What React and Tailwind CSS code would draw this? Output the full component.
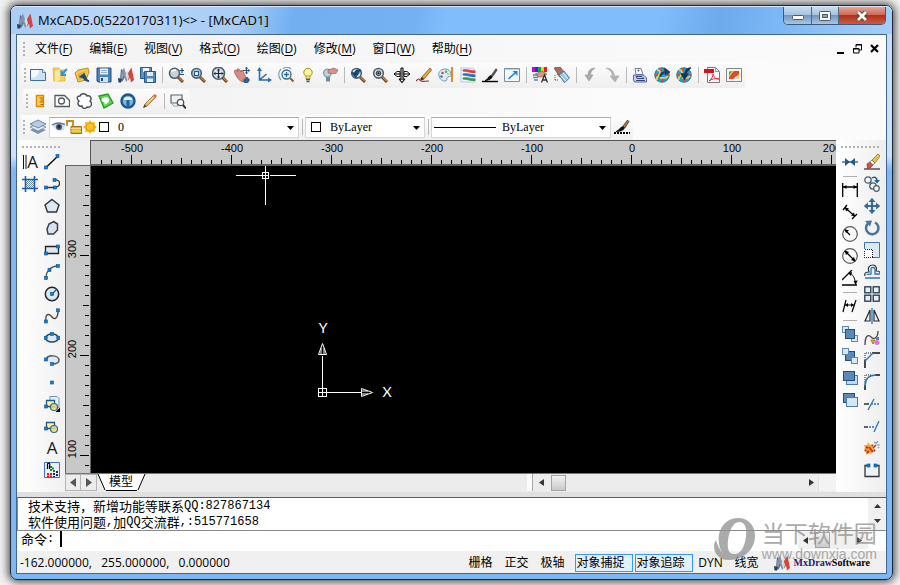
import React, { useLayoutEffect, useRef, useState } from "react";

const LATIN = "font-['Open_Sans','Noto_Sans_CJK_SC',sans-serif]";

/* ---------- drawing helpers ---------- */

function Icon({ children, className = "" }) {
  return (
    <svg width="16" height="16" viewBox="0 0 16 16" className={`block shrink-0 ${className}`} fill="none" aria-hidden="true">
      {children}
    </svg>
  );
}

const Node = ({ x, y }) => <rect x={x} y={y} width="3" height="3" fill="#0a84d8" stroke="#0a4f94" strokeWidth=".6" />;

const Lens = ({ children, fill = "#b9d3ea", r = 4.8 }) => (
  <>
    <path d="M10 10l5 5" stroke="#7a3c12" strokeWidth="3" />
    <path d="M10.5 10.2l4.2 4.2" stroke="#d58a45" strokeWidth="1.2" />
    <circle cx="6.5" cy="6.3" r={r} fill={fill} stroke="#4d5f70" strokeWidth="1.6" />
    {children}
  </>
);

const Logo = () => (
  <>
    <path d="M2 12L3 2l3 2 1 6-3 5z" fill="#4d6c93" />
    <path d="M4 4L6 .500l4 12L8 15 6 9l-3 5.500L.500 15z" fill="#8393a8" />
    <path d="M10 6l3.500-5.500L16 13l-3 2.500-1-5-2 3z" fill="#d8433c" />
    <path d="M9 3l2 7-1.500 4-2-6z" fill="#d5dce4" />
    <path d="M0 11l4 1-1 3.500H.500z" fill="#26405e" />
  </>
);

const Folder = () => (
  <>
    <path d="M1 1h6l1 2h5v11H2z" fill="#f5cf62" stroke="#d9a52e" strokeWidth=".7" />
    <path d="M3 4l5-2v11l-5 2z" fill="#fde79b" />
  </>
);

const Globe = ({ children }) => (
  <>
    <circle cx="8" cy="8" r="7.3" fill="#2c9bd0" stroke="#216887" strokeWidth=".8" />
    <path d="M3 3c3 0 4 3 2 5s-3 3-2 5M6 11c3-1 5 2 8-2" stroke="#f4d04c" strokeWidth="1.8" />
    <path d="M7 1v3M1 8h3M8 15l1-3M13 8h2" stroke="#df4a35" strokeWidth="1.8" />
    {children}
  </>
);

const Pencil = () => (
  <>
    <path d="M3 11L12 2l2 2-9 9-3 1z" fill="#f0b450" stroke="#94672f" strokeWidth=".8" />
    <path d="M11 3l2-2 2 2-2 2z" fill="#d86454" />
    <path d="M1 15l1.5-3.5 2 2z" fill="#3b3b3b" />
    <path d="M5 10.5l7-7" stroke="#fae1a4" />
  </>
);

const Brush = () => (
  <>
    <path d="M0 14.5h16" stroke="#000" strokeWidth="1.4" />
    <path d="M3 13c2 0 3-4 6-5l2 1.5C9 13 6 14 3 14z" fill="#111" />
    <path d="M9.5 8L14 1.5 15.2 3l-4 6z" fill="#555" stroke="#333" strokeWidth=".5" />
  </>
);

const Sq = ({ x, y, s = 9, dark, light }) => (
  <rect x={x} y={y} width={s} height={s} fill={dark ? "#5d89b7" : light ? "#d9e8f5" : "#b8d0e7"} stroke={dark ? "#214e80" : "#5f89b3"} strokeWidth="1" />
);

const BlockShape = () => (
  <>
    <path d="M2.500 4.500h8v6h-8z" fill="#fff4a6" stroke="#215a86" strokeWidth="1.300" />
    <circle cx="10" cy="11" r="3.500" fill="#ead97c" fillOpacity=".85" stroke="#3c6688" strokeWidth="1.200" />
    <Node x=".500" y="9" />
  </>
);

const ART = {
  logo: <Logo />,
  sheet: <><path d="M.5 2.5h12l3 3v8H.5z" fill="#cde3f3" stroke="#416d99" /><path d="M1 3h8c0 5-4 8-8 8z" fill="#f4fafd" /><path d="M12.5 2.5v3h3" fill="#fff" stroke="#416d99" strokeWidth=".8" /></>,
  open: <><Folder /><path d="M15 2l-5 5M9.5 3.500V8H14" stroke="#2b94da" strokeWidth="2" /></>,
  openEdit: <><path d="M1 6l3-3 10-2 1 4-3 8-8 2z" fill="#f3ca4e" stroke="#a87a17" strokeWidth=".8" /><path d="M4 7l8-3-2 7-5 2z" fill="#dfaa35" /><path d="M15 14c-3 0-5-2-5-4M7 9.500l3-2 2 4z" stroke="#1f487e" strokeWidth="2" fill="#1f487e" /></>,
  save: <><path d="M1 1h14v14H2l-1-1z" fill="#4b81bc" stroke="#25517e" /><path d="M4 1.500h8v6H4z" fill="#eaf3fb" /><path d="M5 3.500h6M5 5.500h6" stroke="#8cb0d1" /><path d="M4 10h8v5H4z" fill="#d5dfe8" /><path d="M5 11h2v3H5z" fill="#28496c" /></>,
  saveAll: <><path d="M.5.5h11v11H.5z" fill="#5c91c8" stroke="#29578a" /><path d="M3 1h6v4H3z" fill="#eef6ff" /><path d="M4.500 4.500h11v11h-11z" fill="#4f86c0" stroke="#29578a" /><path d="M7 5h6v4H7zM7 11.500h6V15H7z" fill="#e4eef7" /></>,
  zoomPm: <><Lens r="5" fill="#cbd4dc"><path d="M3 4l5-1" stroke="#fff" strokeWidth="1.5" /></Lens><path d="M11.500 3.500h5M14 1v5M11.500 7.500h5" stroke="#174a7f" strokeWidth="1.1" /></>,
  zoomWin: <Lens><rect x="4.500" y="4.500" width="4" height="4" fill="#fff" stroke="#1e5c98" strokeWidth="1.200" /></Lens>,
  zoomExt: <><Lens r="6" fill="#d9e3ec" /><path d="M6.500 2v9M2 6.500h9" stroke="#1c2b3d" strokeWidth="1.200" /><path d="M6.500 1.200L8 3.500H5zM6.500 11.800L8 9.500H5zM1.200 6.500L3.500 5v3zM11.800 6.500L9.500 5v3z" fill="#1c2b3d" /></>,
  pan: <><path d="M0 4l2-1 2 2-1-3 2 0 2 3 0-2 2 1 3 7-3 4C5 14 2 9 0 4z" fill="#d88c84" stroke="#a35a52" strokeWidth=".8" /><path d="M9 13l4-3.500 3 3.500-2 3h-4z" fill="#33618f" /><path d="M12.500 0v7M9 3.500h7" stroke="#24558b" strokeWidth="1.200" /><path d="M12.500-.3l1.500 2h-3zM16.200 3.500l-2 1.500V2zM12.500 7.300l1.500-2h-3z" fill="#24558b" /></>,
  axes: <><path d="M3.500 2v11H14M3.500 13l7-6" stroke="#2c6cab" strokeWidth="1.600" /><path d="M3.500 0L6 4H1zM16 13l-4 2.500v-5z" fill="#2c6cab" /></>,
  orbit: <><circle cx="8.500" cy="7.500" r="4.500" fill="#edf5fb" stroke="#36668f" strokeWidth="1.300" /><path d="M8.500 5v5M6 7.500h5" stroke="#236db0" strokeWidth="1.300" /><path d="M12 11l3.500 3.500" stroke="#9b5a23" strokeWidth="2" /><path d="M3 2C0 5 0 10 3 13M5 1.500C8-.5 11 0 13 2" stroke="#7aa0c2" strokeWidth="1.200" /></>,
  bulb: <><circle cx="8" cy="5.500" r="4.200" fill="#fff69a" stroke="#a48d22" /><path d="M6 9h4v3H6z" fill="#ffe566" stroke="#a48d22" strokeWidth=".7" /><path d="M6 12.500h4M6.500 14.500h3" stroke="#4a5866" strokeWidth="1.400" /></>,
  bulbHand: <><circle cx="5.500" cy="6" r="4" fill="#bed4e4" stroke="#6a8ba7" /><path d="M4 10h4v4.500H4z" fill="#7089a0" /><path d="M6 3l6-2 4 2-2 3.500H9L6 6z" fill="#d99087" stroke="#9d5550" strokeWidth=".6" /></>,
  zoomPrev: <Lens fill="#d8e4ed"><path d="M11 4C9 2 5 3 5 7M2.500 6l3 4 3-4z" fill="#174777" stroke="#174777" strokeWidth="1.500" /></Lens>,
  zoomDyn: <Lens fill="#dce3e8"><circle cx="6.500" cy="6.300" r="2.300" fill="#9eabb5" stroke="#293845" /><circle cx="6.500" cy="6.300" r="1" fill="#111" /></Lens>,
  spread: <><path d="M7 1v12M9 1v12M0 7h6M10 7h6" stroke="#000" strokeWidth="1.100" /><path d="M7 1h2M5 12h2M9 12h2M5 12l3 3.500 3-3.500" stroke="#000" strokeWidth="1.100" /><path d="M3 4.500L0 7l3 2.500h3M13 4.500L16 7l-3 2.500h-3M3 4.500h3v5M13 4.500h-3v5" stroke="#000" strokeWidth=".9" /></>,
  drawPen: <><path d="M0 14c4-4 3-1 5 0s4 0 8 0" stroke="#8b3327" strokeWidth="1.200" /><path d="M5 11L14 1l1.500 2L8 12l-3 1z" fill="#e9a43a" stroke="#86571c" strokeWidth=".8" /><path d="M4.500 13.500L6 10l2 2z" fill="#222" /></>,
  palette: <><path d="M7 2C2 2 0 6 1 9c1 4 4 5 6 5 3 0 1-3 3-4s3 0 3-3c0-3-3-5-6-5z" fill="#dcecf5" stroke="#5f9ab9" /><circle cx="4.500" cy="6" r="1.300" fill="#e04b3d" /><circle cx="8" cy="4.800" r="1.300" fill="#5ab04c" /><circle cx="3.500" cy="9.500" r="1.300" fill="#3c75c0" /><circle cx="10" cy="7" r="1.100" fill="#efb82c" /><path d="M14 0v15" stroke="#e08b2d" strokeWidth="2" /></>,
  layersColor: <><path d="M1 1h12l2 2v12H1z" fill="#edf3fa" stroke="#a7bfd7" strokeWidth=".8" /><path d="M3 3c5-1 7 1 12 1v1.500C10 6 8 4 3 4z" fill="#e23b36" stroke="#e23b36" /><path d="M3 7c5-1 7 1 12 1v1.500C10 10 8 8 3 8z" fill="#3166c8" stroke="#3166c8" /><path d="M3 11c5-1 7 1 12 1v1.500c-5 .5-7-1.500-12-1.500z" fill="#39984a" stroke="#39984a" /></>,
  brush: <Brush />,
  brushDots: <><path d="M0 14h16" stroke="#000" strokeWidth="2" strokeDasharray="2 1" /><path d="M2 12c2 0 4-4 7-5l2 2c-2 3-5 4-9 4z" fill="#111" /><path d="M9 7l4.500-6L15 2.500 11 9z" fill="#a5753e" stroke="#333" strokeWidth=".7" /></>,
  fit: <><path d="M.5 1.500h15v13H.5z" fill="#f5fafe" stroke="#7191ac" /><path d="M1 2.500h14" stroke="#b9cfe2" /><path d="M4.500 12l6.500-6" stroke="#1e88d8" strokeWidth="1.600" /><path d="M13.500 4v5L8.500 4z" fill="#1e88d8" /></>,
  colorHand: <><path d="M0 0h3v5H0z" fill="#d400d4" /><path d="M3 0h3v5H3z" fill="#2030f0" /><path d="M6 0h3v5H6z" fill="#00a840" /><path d="M9 0h3v5H9z" fill="#f2d400" /><path d="M12 0h3v5h-3z" fill="#ef1b1b" /><path d="M3 7l7-3 5 3-3 3-6 0z" fill="#d59788" stroke="#89514a" strokeWidth=".6" /><path d="M1 8h5M1 10.500h5M2 13h4" stroke="#6189ad" strokeWidth="1.500" /><path d="M9.500 15.500L12.500 8l3 7.500M10.500 13h4" stroke="#333" strokeWidth="1.300" /></>,
  eraseHand: <><path d="M0 1l6-1 4 5-4 5z" fill="#a96d64" stroke="#734641" strokeWidth=".8" /><path d="M5 8l5-4 5.500 7-5 4.500z" fill="#9cc3e0" stroke="#4a7ba0" /><path d="M7 9l5 5M9 6l5 6" stroke="#eef7ff" /><path d="M1 8v5M3 7l2 3M1 13h4" stroke="#555" strokeDasharray="1 1" /></>,
  undo: <path d="M13 1C8 1 6 4 6 8H3l4 6 4-6H8.500c0-3 1.500-5 4.500-7z" fill="#aaa" stroke="#999" strokeWidth=".6" />,
  redo: <path d="M2 1c5 0 8 3 8.500 8H15l-4 6-5-6h2.500C8 5 6 3 2 1z" fill="#b3b3b3" stroke="#aaa" strokeWidth=".6" />,
  print: <><path d="M3 1.500h6l2 6H4z" fill="#fff" stroke="#6d7ca8" /><circle cx="6.500" cy="3.500" r="1" fill="#445a94" /><path d="M1.500 8h10l3 3v4h-12l-1-2z" fill="#cad3ed" stroke="#5668a0" /><path d="M4 9.500h6l2 2H5zM4 13.500h9" stroke="#34477f" strokeWidth="1" /></>,
  globeUp: <Globe><path d="M6 10c0-4 3-5 6-5M10 1.500L15.500 5 11 8" fill="#18416e" stroke="#18416e" strokeWidth="1.500" /></Globe>,
  globeDown: <Globe><path d="M15 1c-5 0-6 3-6 7M5.500 7h6L8.500 12z" fill="#143655" stroke="#143655" strokeWidth="1.500" /></Globe>,
  pdf: <><path d="M3.500.5h8l4 4v11h-12z" fill="#fff" stroke="#6a6a6a" strokeWidth=".9" /><path d="M11.500.5v4h4" stroke="#999" /><path d="M0 2h10v4H0z" fill="#d21518" /><path d="M5 14c3-2 4-5 4-7 1 4 3 5 6 5-4-1-7 0-10 2z" stroke="#df2a2a" strokeWidth="1" /></>,
  image: <><path d="M.5 1.500h15v13H.5z" fill="#f5f5f5" stroke="#858585" /><path d="M3 4h10v8H3z" fill="#f4c648" /><path d="M3 10l5-6h5v3l-6 5H3z" fill="#dd4b28" /><path d="M3 5l3-1-3 4z" fill="#4f9b46" /><path d="M8 12l2-3 3 3z" fill="#cde" /></>,
  ruler: <><path d="M4.500 2.500h7v11h-7z" fill="#ffd24d" stroke="#e08600" strokeWidth="1.400" /><path d="M7.500 5H11M8.500 7H11M7.500 9H11M8.500 11.500H11" stroke="#a95d00" /></>,
  area: <><path d="M1 2.500h9.500l5 5V13.500H1z" fill="#fff" stroke="#505a62" strokeWidth="1.300" /><circle cx="7.500" cy="8" r="3" stroke="#505a62" strokeWidth="1.300" /></>,
  cloud: <path d="M4 3c1-3 6-3 7 0 4-1 5 3 3 5 3 3 1 7-3 6-1 2-5 2-5-1-4 1-5-3-3-5-3-3-2-5 1-5z" fill="#fff" stroke="#42505a" strokeWidth="1.400" />,
  green: <><path d="M1 3l9-2 5 9-9 5z" fill="#5ed84a" stroke="#249b25" strokeWidth="1.300" /><path d="M5 5c4-2 7 0 6 3s-3 2-4 4L6 9c-3 0-3-3-1-4z" fill="#fff" /></>,
  wheel: <><circle cx="8" cy="8" r="6.500" fill="#7fb4dd" stroke="#195990" strokeWidth="2.400" /><path d="M4 5c2-1.500 6-1.500 8 0v2H4z" fill="#e3f1fb" /><path d="M6.500 7h3v6h-3z" fill="#1866a3" /></>,
  pencil: <Pencil />,
  find: <><path d="M1 2h11v8H1z" fill="#eef0f2" stroke="#5c6771" strokeWidth="1.200" /><path d="M1 10l3 3h4" stroke="#9aa2a9" /><circle cx="10.500" cy="9.500" r="3.200" fill="#fff" stroke="#4b5966" strokeWidth="1.300" /><path d="M13 12l3 3.500" stroke="#333" strokeWidth="2" /></>,
  layers: <><path d="M0 11l7-3 9 3-8 4z" fill="#7893ad" /><path d="M0 8l8-3 8 3-8 4z" fill="#e8eff6" stroke="#6b88a5" strokeWidth=".8" /><path d="M0 5l8-4 8 4-8 4z" fill="#b7cce0" stroke="#5d7e9e" strokeWidth=".9" /></>,
  eye: <><path d="M2 6c4-4 9-3 13 0l-1 5c-4 2-9 0-12-5z" fill="#d3dce5" /><path d="M2 6c4-2.500 8-3 13-.500" stroke="#6c7d8e" strokeWidth="1.400" /><circle cx="9" cy="8" r="3" fill="#34597f" /><circle cx="9" cy="7.500" r="1.200" fill="#0e1d2e" /></>,
  lock: <><path d="M1 7V2h6v6" stroke="#c08a24" strokeWidth="1.800" /><path d="M5 7.500h10.500v7H5z" fill="#e9b03a" stroke="#a36c0d" /><path d="M5 9.500h10M5 12h10" stroke="#ffde83" /></>,
  sun: <><path d="M8 1l1.700 2.500L13 3l-.5 3L15 8l-2.500 2 .5 3-3.300-.5L8 15l-1.700-2.500L3 13l.5-3L1 8l2.500-2L3 3l3.300.5z" fill="#ffb400" /><circle cx="8" cy="8" r="4" fill="#ffc928" stroke="#f19600" /></>,
  box: <rect x="3.500" y="3.500" width="9" height="9" fill="#fff" stroke="#000" />,

  hatch: <><path d="M3.500 0v16M12.500 0v16M0 3.500h16M0 12.500h16" stroke="#1f5f9f" strokeWidth="1.600" /><path d="M4 4l8 8M4 6l6 6M6 4l6 6M4 8l4 4M8 4l4 4M4 10l2 2M10 4l2 2" stroke="#42719f" strokeWidth=".8" /></>,
  line: <><path d="M2 13.500L14 2" stroke="#111" strokeWidth="1.500" /><Node x=".5" y="12" /><Node x="12" y=".5" /></>,
  pline: <><path d="M2 11.500h10M10 4c7-1 7 6 2 7" stroke="#333" strokeWidth="1.300" /><Node x=".5" y="10" /><Node x="9.500" y="10" /><Node x="9" y="2.500" /></>,
  pentagon: <path d="M8 1.500L15 7l-2.500 7h-9L1 7z" fill="#dce9f3" stroke="#2e3338" strokeWidth="1.400" />,
  polygon: <path d="M9.500 1.500L13.500 4v6l-4 4H4L3 9l2-5z" fill="#d6e2ee" stroke="#3a3f44" strokeWidth="1.500" />,
  rect: <><path d="M1.500 4.500h13v7h-13z" fill="#dce9f3" stroke="#222" strokeWidth="1.300" /><Node x=".5" y="10" /><Node x="12.500" y="3" /></>,
  arc: <><path d="M2 14C2 7 7 2 14 2" stroke="#555048" strokeWidth="1.400" /><Node x=".5" y="12.500" /><Node x="4" y="4.500" /><Node x="12.500" y=".5" /></>,
  circle: <><circle cx="8" cy="8" r="6.700" fill="#dce9f4" stroke="#23282e" strokeWidth="1.500" /><path d="M8 8l5-5" stroke="#1c5d94" strokeWidth="1.200" /><Node x="6.500" y="6.500" /></>,
  spline: <><path d="M2 13C1 4 6 6 8 9s6 2 6-6" stroke="#4e4840" strokeWidth="1.400" /><Node x=".5" y="12" /><Node x="12.500" y=".8" /></>,
  ellipse: <><ellipse cx="8" cy="8" rx="6.500" ry="4" fill="#dce9f4" stroke="#38424a" strokeWidth="1.400" /><Node x=".2" y="6.500" /><Node x="12.800" y="6.500" /><Node x="6.500" y="2.500" /></>,
  ellArc: <><path d="M2 8c0-6 13-5 13 0 0 3-4 4-7 4" fill="#dce9f4" stroke="#4e5862" strokeWidth="1.500" /><Node x=".5" y="6" /><Node x="6.500" y="10.500" /></>,
  point: <Node x="6.500" y="7" />,
  insert: <><path d="M6 .500h7l2 2v9H6z" fill="#e5f0f8" stroke="#6a94ba" /><BlockShape /><path d="M16 11.500V16h-4.500z" fill="#000" /></>,
  block: <BlockShape />,
  table: <><path d="M.5.500h15v15H.5z" fill="#eaf2fb" stroke="#3d73b2" /><path d="M3.500 7V2c2-2 3 0 2 2v3" stroke="#000" strokeWidth="1.200" /><path d="M3 12h2M6 12h2M3 14.500h2M6 14.500h2" stroke="#e8101b" strokeWidth="2" /><path d="M7 4v5M8 6.500h2M9 9h2" stroke="#138321" strokeWidth="2" strokeDasharray="2 1" /><path d="M10 11v4M13 9v6" stroke="#21217b" strokeWidth="2" strokeDasharray="2 1" /></>,

  join: <><path d="M0 8h16" stroke="#24648e" strokeWidth="1.300" /><path d="M3 4l5 4-5 4zM13 4L8 8l5 4z" fill="#1e5d90" /></>,
  dimLin: <><path d="M.7 1v14M15.300 1v14M1 5h14" stroke="#000" strokeWidth="1.300" /><path d="M1 5l3.500-2v4zM15 5l-3.500-2v4z" fill="#000" /></>,
  dimAli: <><path d="M3 3.500l10 9M1 6l4-5M10 15l5-5" stroke="#000" strokeWidth="1.300" /><path d="M3 3.500l4 1-3 3zM13 12.500l-4-1 3-3z" fill="#000" /></>,
  dimRad: <><circle cx="8" cy="8" r="7.300" stroke="#5b5b5b" strokeWidth="1.200" /><path d="M3 4l5 5" stroke="#000" strokeWidth="1.300" /><path d="M2.500 3l4.500 1.500L4 7z" fill="#000" /></>,
  dimDia: <><circle cx="8" cy="8" r="7.300" stroke="#5b5b5b" strokeWidth="1.200" /><path d="M3 3l10 10" stroke="#000" strokeWidth="1.300" /><path d="M2.500 2.500L7 4 4 7zM13.500 13.500L9 12l3-3z" fill="#000" /></>,
  dimAng: <><path d="M0 15h15M0 10L10 0" stroke="#000" strokeWidth="1.300" /><path d="M7 3c4 1 6 5 6.500 11" stroke="#000" /><path d="M6 3l4-1-1 4zM13.700 15l-2-4 4-.5z" fill="#000" /></>,
  dimObl: <><path d="M1 14L4 2M10 14l4-12M3 7h9" stroke="#000" strokeWidth="1.200" /><path d="M3 7l3-2v4zM12 7L9 5v4z" fill="#000" /></>,
  order1: <><Sq x=".5" y=".5" s="6" light /><Sq x="9.500" y="9.500" s="6" light /><Sq x="3.500" y="3.500" s="9" dark /></>,
  order2: <><Sq x="3.500" y="3.500" s="9" dark /><Sq x=".5" y=".5" s="6" light /><Sq x="9.500" y="9.500" s="6" light /></>,
  order3: <><rect x="4.500" y="5.500" width="11" height="9" fill="#c4d9ec" stroke="#4d7cab" /><rect x="1.500" y="1.500" width="11" height="9" fill="#5d89b7" stroke="#214e80" /></>,
  order4: <><rect x="1.500" y="1.500" width="11" height="9" fill="#5d89b7" stroke="#214e80" /><rect x="4.500" y="5.500" width="11" height="9" fill="#d6e5f2" stroke="#4d7cab" /></>,

  erase: <><path d="M0 15h16" stroke="#3a2521" strokeWidth="1.200" /><path d="M3 10l3-2 3 3-3 3-2.500.500z" fill="#d85140" stroke="#86302a" strokeWidth=".7" /><path d="M6 8l2-2 3 3-2 2z" fill="#eef3f8" stroke="#4d6374" strokeWidth=".7" /><path d="M8 6l6-6 2 2-5 7z" fill="#f2c33e" stroke="#7d6724" strokeWidth=".7" /></>,
  copy: <><circle cx="4" cy="4" r="3.200" fill="#eef3f7" stroke="#4e5c6a" strokeWidth="1.300" /><circle cx="9" cy="10" r="3.200" fill="#eef3f7" stroke="#4e5c6a" strokeWidth="1.300" /><circle cx="12.500" cy="12.500" r="2.800" fill="#eef3f7" stroke="#4e5c6a" strokeWidth="1.200" /><path d="M8 2c3-2 5 0 5 3" stroke="#1e5f98" strokeWidth="1.500" /><path d="M10 4h6l-3 3.500z" fill="#1e5f98" /></>,
  move: <><path d="M8 2v12M2 8h12" stroke="#376b9f" strokeWidth="2.200" /><path d="M8-.2L11.500 4h-7zM8 16.200L11.500 12h-7zM-.2 8L4 4.500v7zM16.200 8L12 4.500v7z" fill="#376b9f" /></>,
  rotate: <><path d="M4 3.500a6.200 6.200 0 1 0 7-1" stroke="#4474a6" strokeWidth="2.500" /><path d="M1 1l7-.5-2 6z" fill="#4474a6" /></>,
  scale: <><path d="M.5.500h15v15H.5z" fill="#dce9f5" stroke="#3c76ab" /><path d="M0 7h9v9H0z" fill="#fff" /><path d="M.500 7.500h8v8h-8z" stroke="#222" strokeDasharray="1 1" shapeRendering="crispEdges" /></>,
  offset: <><path d="M1 12c-1-3 1-4 4-4-2-5 1-7 4-7s4 3 3 6c3 0 4 1 4 2" stroke="#234" strokeWidth="1.200" /><path d="M3 11c0-1 3-1 4-1V5c0-2 4-2 4 0v5h5M1 14h15" stroke="#2677bd" strokeWidth="1.300" /></>,
  array: <>{[[.8, .8], [9.200, .8], [.8, 9.200], [9.200, 9.200]].map(([x, y]) => <rect key={`${x}-${y}`} x={x} y={y} width="6" height="6" fill="#e6eff7" stroke="#20374e" strokeWidth="1.300" />)}</>,
  mirror: <><path d="M8 0v16" stroke="#2378bd" strokeWidth="1.300" /><path d="M6 2v11H1zM10 2v11h5z" fill="#edf3f7" stroke="#252b31" strokeWidth="1.200" /></>,
  splineEdit: <><path d="M1 15C1 6 4 4 7 7s7 1 7-6" stroke="#444" strokeWidth="1.300" /><path d="M7 10h4l-2 4z" fill="#e9b83a" stroke="#ae771f" /><circle cx="13" cy="12.500" r="2.500" fill="#d977cf" /><path d="M12 7h3v3h-3z" fill="#4a86c4" /></>,
  chamfer: <><path d="M1 16V8M8 1h8" stroke="#111" strokeWidth="1.500" /><path d="M1 8V1h7" stroke="#222" strokeDasharray="1 1" /><path d="M1 9l8-8" stroke="#2477c2" strokeWidth="1.500" /></>,
  fillet: <><path d="M1 16v-5M11 1h5" stroke="#111" strokeWidth="1.500" /><path d="M1 8V1h7" stroke="#222" strokeDasharray="1 1" /><path d="M1 12C1 5 5 1 12 1" stroke="#2477c2" strokeWidth="1.700" /></>,
  trim: <><path d="M0 8h5" stroke="#222" strokeWidth="1.400" /><path d="M7 8h9" stroke="#2477c2" strokeWidth="1.300" strokeDasharray="2 1" /><path d="M4 14l6-11" stroke="#2477c2" strokeWidth="1.300" /></>,
  extend: <><path d="M0 9h4" stroke="#222" strokeWidth="1.400" /><path d="M5 9h6" stroke="#2477c2" strokeWidth="1.300" strokeDasharray="2 1" /><path d="M10 14l5-11" stroke="#2477c2" strokeWidth="1.300" /></>,
  explode: <><path d="M0 5l3 0 1-3 2 3 3-1-1 3 3 2-3 2 0 3-3-1-3 2 0-4-2-2 1-1z" fill="#f6b02e" /><path d="M3 13l2-2M5 7l4 5M2 7l2 1M8 6l1-1" stroke="#d5251d" strokeWidth="2" /><path d="M10 10l1 1M1 10l1 1" stroke="#a8171a" strokeWidth="2" /><path d="M9 8l3-3" stroke="#7b4a30" strokeWidth="1.600" /><path d="M12 4l2-3M13 5h3M12 3l-2-1M14 7l1 1" stroke="#7f97ab" strokeWidth="1.200" /></>,
  breakAt: <><path d="M3 3.500H1v11h14v-11h-2" fill="#edf3f8" stroke="#2e363e" strokeWidth="1.300" /><Node x="3" y="2" /><Node x="10" y="2" /></>,
};

/* ---------- controls ---------- */

function Tool({ name, label, letter }) {
  return (
    <button type="button" aria-label={label || name} className="flex h-[22px] w-[22px] shrink-0 items-center justify-center hover:bg-[#dbeafb]">
      {letter ? (
        <span className="flex items-center font-['Open_Sans',sans-serif] text-[17px] leading-4 text-[#181818]">
          {name === "mtext" && <svg width="5" height="14" aria-hidden="true"><path d="M1.500 0v14M4 0v14" stroke="#111" /></svg>}
          A
        </span>
      ) : (
        <Icon>{ART[name]}</Icon>
      )}
    </button>
  );
}

const Sep = () => <span className="flex h-4 w-[6px] shrink-0 justify-center"><span className="w-px bg-[#b9b9b9]" /></span>;
const Grip = () => <span className="mr-px h-[14px] w-[2px] shrink-0 bg-[repeating-linear-gradient(180deg,#b2b2b2_0_2px,transparent_2px_4px)]" />;
const HGrip = () => <span className="mx-[5px] mt-[6px] block h-[2px] bg-[repeating-linear-gradient(90deg,#b2b2b2_0_2px,transparent_2px_4px)]" />;

function Strip({ items }) {
  return items.map((n, i) => (n === "|" ? <Sep key={i} /> : <Tool key={i} name={n} />));
}

function Combo({ label, value, width, children }) {
  return (
    <div className={`relative flex h-[21px] items-center border border-[#d3d6da] border-t-[#a9adb3] bg-white pl-[6px] ${width}`}>
      {children}
      <select aria-label={label} defaultValue={value} className="h-full min-w-0 flex-1 appearance-none bg-transparent pl-[6px] font-['Liberation_Serif',serif] text-[12px] text-black outline-none">
        <option>{value}</option>
      </select>
      <svg width="7" height="4" className="pointer-events-none absolute right-1 top-2" aria-hidden="true"><path d="M0 0h7L3.500 4z" fill="#000" /></svg>
    </div>
  );
}

const MENUS = [["文件", "F"], ["编辑", "E"], ["视图", "V"], ["格式", "O"], ["绘图", "D"], ["修改", "M"], ["窗口", "W"], ["帮助", "H"]];
const BAR1 = ["sheet", "open", "openEdit", "save", "logo", "saveAll", "|", "zoomPm", "zoomWin", "zoomExt", "pan", "axes", "orbit", "bulb", "bulbHand", "|", "zoomPrev", "zoomDyn", "spread", "drawPen", "palette", "layersColor", "brush", "fit", "|", "colorHand", "eraseHand", "|", "undo", "redo", "|", "print", "globeUp", "globeDown", "|", "pdf", "image"];
const BAR2 = ["ruler", "area", "cloud", "green", "wheel", "pencil", "|", "find"];
const DRAW = ["line", "pline", "pentagon", "polygon", "rect", "arc", "circle", "spline", "ellipse", "ellArc", "point", "insert", "block", "text", "table"];
const DIMS = ["join", "|", "dimLin", "dimAli", "dimRad", "dimDia", "dimAng", "|", "dimObl", "|", "order1", "order2", "order3", "order4"];
const MODIFY = ["erase", "copy", "move", "rotate", "scale", "offset", "array", "mirror", "splineEdit", "chamfer", "fillet", "trim", "extend", "explode", "breakAt"];

/* ---------- rulers and drawing area ---------- */

function useSize() {
  const ref = useRef(null);
  const [size, setSize] = useState({ width: 0, height: 0 });
  useLayoutEffect(() => {
    const measure = () => {
      const r = ref.current.getBoundingClientRect();
      setSize({ width: r.width, height: r.height });
    };
    measure();
    const watcher = new ResizeObserver(measure);
    watcher.observe(ref.current);
    return () => watcher.disconnect();
  }, []);
  return [ref, size];
}

const countTo = (length) => Array.from({ length: Math.max(0, Math.ceil(length / 10) - 1) }, (_, i) => i + 1);

function TopRuler() {
  const [ref, { width }] = useSize();
  return (
    <svg ref={ref} className="block h-[25px] min-w-0 flex-1 bg-[#c8c8c8]" aria-hidden="true">
      {countTo(width).map((i) => {
        const x = i * 10 + 1;
        const major = (i - 4) % 10 === 0;
        const mid = (i - 4) % 5 === 0;
        return (
          <g key={i}>
            <rect x={x} y={major ? 15 : mid ? 18 : 20} width="1" height={major ? 9 : mid ? 6 : 4} fill="#000" />
            {major && <text x={x + 1} y="12" textAnchor="middle" className="fill-black font-['Liberation_Sans',sans-serif] text-[11px]">{-500 + (i - 4) * 10}</text>}
          </g>
        );
      })}
      <rect width="100%" height="1" fill="#555" />
      <rect width="1" height="100%" fill="#555" />
      <rect y="24" width="100%" height="1" fill="#646464" />
    </svg>
  );
}

function SideRuler() {
  const [ref, { height }] = useSize();
  return (
    <svg ref={ref} className="block h-full w-[25px] shrink-0 bg-[#c8c8c8]" aria-hidden="true">
      {countTo(height).map((i) => {
        const y = i * 10;
        const major = (i + 1) % 10 === 0;
        const mid = (i + 1) % 5 === 0;
        return (
          <g key={i}>
            <rect x={major ? 15 : mid ? 18 : 20} y={y} width={major ? 9 : mid ? 6 : 4} height="1" fill="#000" />
            {major && <text x={-(y - 6)} y="11" textAnchor="middle" transform="rotate(-90)" className="fill-black font-['Liberation_Sans',sans-serif] text-[11px]">{300 - (i - 9) * 10}</text>}
          </g>
        );
      })}
      <rect width="100%" height="1" fill="#646464" />
      <rect width="1" height="100%" fill="#646464" />
    </svg>
  );
}

function Canvas() {
  return (
    <svg className="block h-full min-w-0 flex-1 border-l border-t border-[#646464] bg-black" fill="none" stroke="#fff" shapeRendering="crispEdges">
      <path d="M144.500 9.500h28M178.500 9.500h26M174.500 0v6M174.500 13v26" />
      <path d="M171.500 6.500h6v6h-6zM171.500 9.500h6M174.500 6.500v6" />
      <path d="M227.500 222.500h8v8h-8zM227.500 226.500h43M231.500 230.500v-41" />
      <path d="M227.500 188.500l4-11 4 11zM230 188v-6M233 188v-6M270.500 222.500l11 4-11 4zM271 225h6M271 228h6" shapeRendering="auto" />
      <text x="232" y="167" textAnchor="middle" stroke="none" className="fill-white font-['Lato',sans-serif] text-[14px]">Y</text>
      <text x="296" y="231" textAnchor="middle" stroke="none" className="fill-white font-['Lato',sans-serif] text-[14px]">X</text>
    </svg>
  );
}

function Arrow({ d, w = 5, h = 7 }) {
  return <svg width={w} height={h} className="block" aria-hidden="true"><path d={d} fill="#333" /></svg>;
}

const THUMB = "border border-[#a5a5a5] bg-linear-to-b from-[#f3f3f3] to-[#c9c9c9]";

function Latin({ children }) {
  return <span className="font-['Liberation_Mono',monospace] text-[12px]">{children}</span>;
}

function StatusButton({ children, on, w }) {
  return (
    <button type="button" aria-pressed={!!on} className={`h-[18px] shrink-0 whitespace-nowrap leading-[16px] ${w} ${on ? "border border-[#3399ff] bg-[#e3f0fd] pl-px text-left" : "border border-transparent text-center"}`}>
      {children}
    </button>
  );
}

/* ---------- window ---------- */

export default function App() {
  return (
    <div className={`flex h-screen flex-col bg-[#f2f2f2] pb-[5px] pl-[10px] pr-[7px] pt-[5px] text-[12px] text-black ${LATIN}`}>
      <div className="relative flex min-h-0 flex-1 flex-col rounded-[7px] border border-[#1b2838] bg-[linear-gradient(180deg,#c6dcf5_0,#cfe1f5_150px,#7db7f4_164px,#7db7f4_100%)] shadow-[0_0_9px_2px_rgba(0,0,0,0.7)]">
        <header className="flex h-7 shrink-0 items-start rounded-t-[6px] border-t border-[#d8eaff] bg-[linear-gradient(100deg,#a9cdf5_0,#b9d6f7_100px,#a9cdf5_225px,#72aff1_280px,#74b1f3_400px,#80bdfc_430px,#80bdfc_640px,#6daaec_700px,#7cb8f7_760px,#a5cef8_100%)] pl-[6px] pr-[6px]">
          <Icon className="mt-[6px]">{ART.logo}</Icon>
          <h1 className="ml-[5px] mt-1 flex-1 whitespace-nowrap text-[13px] leading-[18px]">MxCAD5.0(5220170311)&lt;&gt; - [MxCAD1]</h1>
          <div className="flex h-[18px] overflow-hidden rounded-b-[5px] border border-t-0 border-[#3f5873]">
            <button type="button" aria-label="最小化" className="flex w-7 items-center justify-center border-r border-[#4d6885] bg-[linear-gradient(180deg,#c8dcf0_0,#a9c4de_45%,#7397bc_50%,#a7c6e6_100%)]">
              <svg width="12" height="5" className="mt-[3px]"><rect x=".5" y=".5" width="11" height="4" rx="1" fill="#fff" stroke="#4c5b6b" /></svg>
            </button>
            <button type="button" aria-label="最大化" className="flex w-[27px] items-center justify-center border-r border-[#4d6885] bg-[linear-gradient(180deg,#c8dcf0_0,#a9c4de_45%,#7397bc_50%,#a7c6e6_100%)]">
              <svg width="12" height="10"><rect x=".5" y=".5" width="11" height="9" rx="1" fill="#fff" stroke="#4c5b6b" /><rect x="3.500" y="3.500" width="5" height="3" fill="#89a9ca" stroke="#4c5b6b" /></svg>
            </button>
            <button type="button" aria-label="关闭" className="flex w-[46px] items-center justify-center bg-[linear-gradient(180deg,#e3a497_0,#cd6a58_45%,#b1301c_50%,#cf5b3e_100%)]">
              <svg width="12" height="10"><path d="M2 1l8 8M10 1L2 9" stroke="#5c3531" strokeWidth="4.500" /><path d="M2 1l8 8M10 1L2 9" stroke="#fff" strokeWidth="2.800" /></svg>
            </button>
          </div>
        </header>

        <main className="mx-[5px] mb-[5px] flex min-h-0 flex-1 flex-col border border-[#41668f] bg-[linear-gradient(90deg,#f1f1f1_0,#fbfbfb_70%)]">
          <nav className="flex h-[27px] shrink-0 items-center bg-[linear-gradient(90deg,#f3f3f3,#fbfbfb)] pl-[6px] pr-[7px]">
            <Grip />
            <div className="ml-[9px] flex flex-1 gap-[17px]">
              {MENUS.map(([t, k]) => <button type="button" key={k} className="whitespace-nowrap leading-4">{t}(<span className="underline underline-offset-2">{k}</span>)</button>)}
            </div>
            <div className="flex items-center gap-2">
              <button type="button" aria-label="最小化文档"><svg width="8" height="10" className="block"><path d="M0 8h7v2H0z" fill="#000" /></svg></button>
              <button type="button" aria-label="还原文档"><svg width="9" height="10" className="block" fill="none" stroke="#000"><path d="M3 3.500V.500h5.500V6H6M3 1h6M.500 4.500H6v4.500H.500zM0 5h6" /></svg></button>
              <button type="button" aria-label="关闭文档"><svg width="9" height="9" className="block"><path d="M1 1l7 7M8 1L1 8" stroke="#000" strokeWidth="2.200" /></svg></button>
            </div>
          </nav>

          <div className="flex h-[26px] shrink-0 items-center">
            <div className="ml-1 flex h-[25px] items-center rounded-[3px] bg-linear-to-b from-[#fcfcfc] to-[#efefef] pl-[3px]"><Grip /><Strip items={BAR1} /></div>
          </div>
          <div className="flex h-[26px] shrink-0 items-center">
            <div className="ml-[6px] flex h-[25px] items-center rounded-[3px] bg-linear-to-b from-[#fcfcfc] to-[#efefef] pl-[3px]"><Grip /><Strip items={BAR2} /></div>
          </div>
          <div className="flex h-[26px] shrink-0 items-center">
            <div className="ml-1 flex h-[25px] items-center rounded-[3px] bg-linear-to-b from-[#fcfcfc] to-[#efefef] pl-[2px]">
              <Grip />
              <span className="ml-px flex"><Tool name="layers" /></span>
              <Combo label="图层" value="0" width="w-[250px]">
                <Icon className="-ml-[6px]">{ART.eye}</Icon><Icon>{ART.lock}</Icon><Icon>{ART.sun}</Icon><Icon className="-ml-[2px]">{ART.box}</Icon>
              </Combo>
              <Sep />
              <Combo label="颜色" value="ByLayer" width="w-[120px]"><Icon className="-ml-1">{ART.box}</Icon></Combo>
              <Sep />
              <Combo label="线型" value="ByLayer" width="w-[180px]">
                <span className="-ml-1 h-px w-[62px] bg-black" />
              </Combo>
              <Tool name="brushDots" />
            </div>
          </div>

          <div className="flex min-h-0 flex-1">
            <aside className="w-12 shrink-0 bg-linear-to-r from-white to-[#f1f1f1]">
              <HGrip />
              <div className="mt-[3px] flex pl-[2px]">
                <div className="flex flex-col"><Tool name="mtext" letter /><Tool name="hatch" /></div>
                <div className="flex flex-col">{DRAW.map((n) => <Tool key={n} name={n} letter={n === "text"} />)}</div>
              </div>
            </aside>

            <section className="flex min-w-0 flex-1 flex-col">
              <div className="flex shrink-0"><span className="w-[25px]" /><TopRuler /></div>
              <div className="flex min-h-0 flex-1"><SideRuler /><Canvas /></div>
              <div className="flex h-[19px] shrink-0 items-stretch border-t border-[#777] bg-[#ececec] pb-px">
                <button type="button" aria-label="上一个" className="flex w-4 items-center justify-center border border-[#b5b5b5]"><svg width="6" height="9"><path d="M6 0v9L0 4.500z" fill="#555" /></svg></button>
                <button type="button" aria-label="下一个" className="flex w-4 items-center justify-center border border-l-0 border-[#b5b5b5]"><svg width="6" height="9"><path d="M0 0v9l6-4.500z" fill="#555" /></svg></button>
                <button type="button" className="flex items-stretch leading-4">
                  <svg width="9" height="16"><path d="M1 0l7 15.500H9V0z" fill="#fff" /><path d="M1 0l7 16" stroke="#000" /></svg>
                  <span className="border-b border-black bg-white pl-[3px] pr-1">模型</span>
                  <svg width="9" height="16"><path d="M0 0h8L1 15.500H0z" fill="#fff" /><path d="M8 0L1 16" stroke="#000" /></svg>
                </button>
                <span className="flex-1" />
                <span className="w-[6px] border-r border-[#a8a8a8] bg-[#fafafa]" />
                <div className="flex w-[285px] items-center">
                  <span className="ml-[6px]"><Arrow d="M5 0v7L0 3.500z" /></span>
                  <span className={`ml-[7px] h-4 w-[15px] ${THUMB}`} />
                  <span className="flex-1" />
                  <span className="mr-1"><Arrow d="M0 0v7l5-3.500z" /></span>
                </div>
                <span className="w-[18px] border-l border-[#e0e0e0] bg-[#f3f3f3]" />
              </div>
            </section>

            <aside className="w-[50px] shrink-0 bg-linear-to-r from-white to-[#eeeeee]">
              <HGrip />
              <div className="mt-[3px] flex pl-[3px]">
                <div className="flex w-[22px] flex-col">
                  {DIMS.map((n, i) => (n === "|" ? <span key={i} className="mx-1 flex h-[6px] shrink-0 items-center"><span className="h-px flex-1 bg-[#b0b0b0]" /></span> : <Tool key={i} name={n} />))}
                </div>
                <div className="flex flex-col">{MODIFY.map((n) => <Tool key={n} name={n} />)}</div>
              </div>
            </aside>
          </div>

          <div className="h-[5px] shrink-0 bg-[#e0e0e0]" />
          <div className="flex h-[34px] shrink-0 border-b border-l border-t border-[#8c8c8c] border-t-[#5c5c5c] bg-white">
            <div className="min-w-0 flex-1 whitespace-pre pl-[10px] font-['Noto_Sans_CJK_SC',sans-serif] text-[13px] leading-4">
              <p className="flex h-4 items-center">技术支持，新增功能等联系<Latin>QQ:827867134</Latin></p>
              <p className="flex h-4 items-center">软件使用问题<Latin>,</Latin>加<Latin>QQ</Latin>交流群<Latin>,:515771658</Latin></p>
            </div>
            <div className="flex w-[18px] flex-col items-center justify-between bg-[#f0f0f0] pb-[7px] pt-[6px]">
              <Arrow w="7" h="4" d="M0 4h7L3.500 0z" /><Arrow w="7" h="4" d="M0 0h7L3.500 4z" />
            </div>
          </div>
          <div className="flex h-5 shrink-0 items-start bg-white">
            <label htmlFor="cmd" className="flex h-4 items-center pl-1 font-['Noto_Sans_CJK_SC',sans-serif] text-[13px] leading-4">命令<Latin>:</Latin></label>
            <span className="ml-[6px] h-4 w-[2px] bg-black" />
            <input id="cmd" className="h-4 min-w-0 flex-1 bg-transparent outline-none" />
            <div className="flex h-[18px] w-[70px] items-center bg-[#f0f0f0]">
              <span className="ml-[5px]"><Arrow d="M5 0v7L0 3.500z" /></span>
              <span className={`ml-[7px] h-4 w-[15px] ${THUMB}`} />
              <span className="flex-1" />
              <span className="mr-[6px]"><Arrow d="M0 0v7l5-3.500z" /></span>
            </div>
            <span className="w-[18px]" />
          </div>

          <footer className="flex h-[22px] shrink-0 items-center bg-[#f0f0f0] pl-[3px] pr-[16px] pt-[2px]">
            <output className="flex-1 whitespace-pre">-162.000000,   255.000000,   0.000000</output>
            <StatusButton w="w-9">栅格</StatusButton>
            <StatusButton w="w-9">正交</StatusButton>
            <StatusButton w="w-9">极轴</StatusButton>
            <span className="w-1" />
            <StatusButton w="w-[58px]" on>对象捕捉</StatusButton>
            <span className="w-[2px]" />
            <StatusButton w="w-[58px]" on>对象追踪</StatusButton>
            <StatusButton w="w-9">DYN</StatusButton>
            <StatusButton w="w-9">线宽</StatusButton>
            <span className="ml-[9px] flex items-center">
              <Icon>{ART.logo}</Icon>
              <span className="ml-1 font-['Liberation_Serif',serif] text-[10px] font-bold leading-4"><span className="text-[#20206e]">MxDraw</span>Software</span>
            </span>
          </footer>
        </main>

        <div className="pointer-events-none absolute bottom-[16px] right-[15px] flex items-center gap-[5px] text-[#8f8f8f] opacity-75">
          <svg width="44" height="46" viewBox="0 0 44 46" aria-hidden="true">
            <path d="M25 1C12 1 4 13 6 26c1 11 8 16 17 15 12-1 19-12 19-22C42 8 35 1 25 1zm1 4c6 0 8 6 7 14-1 10-5 18-11 18-6 1-8-5-7-13C16 14 20 5 26 5z" fill="currentColor" fillRule="evenodd" />
            <path d="M3 23c-5 8 0 20 12 20 6 0 11-1 15-4-10 3-18 1-22-5-2-3-4-7-5-11z" fill="currentColor" />
          </svg>
          <div className="flex flex-col">
            <span className="font-['Noto_Sans_CJK_SC',sans-serif] text-[23px] leading-7">当下软件园</span>
            <span className="font-['Liberation_Sans',sans-serif] text-[14px] leading-4">www.downxia.com</span>
          </div>
        </div>
      </div>
    </div>
  );
}
